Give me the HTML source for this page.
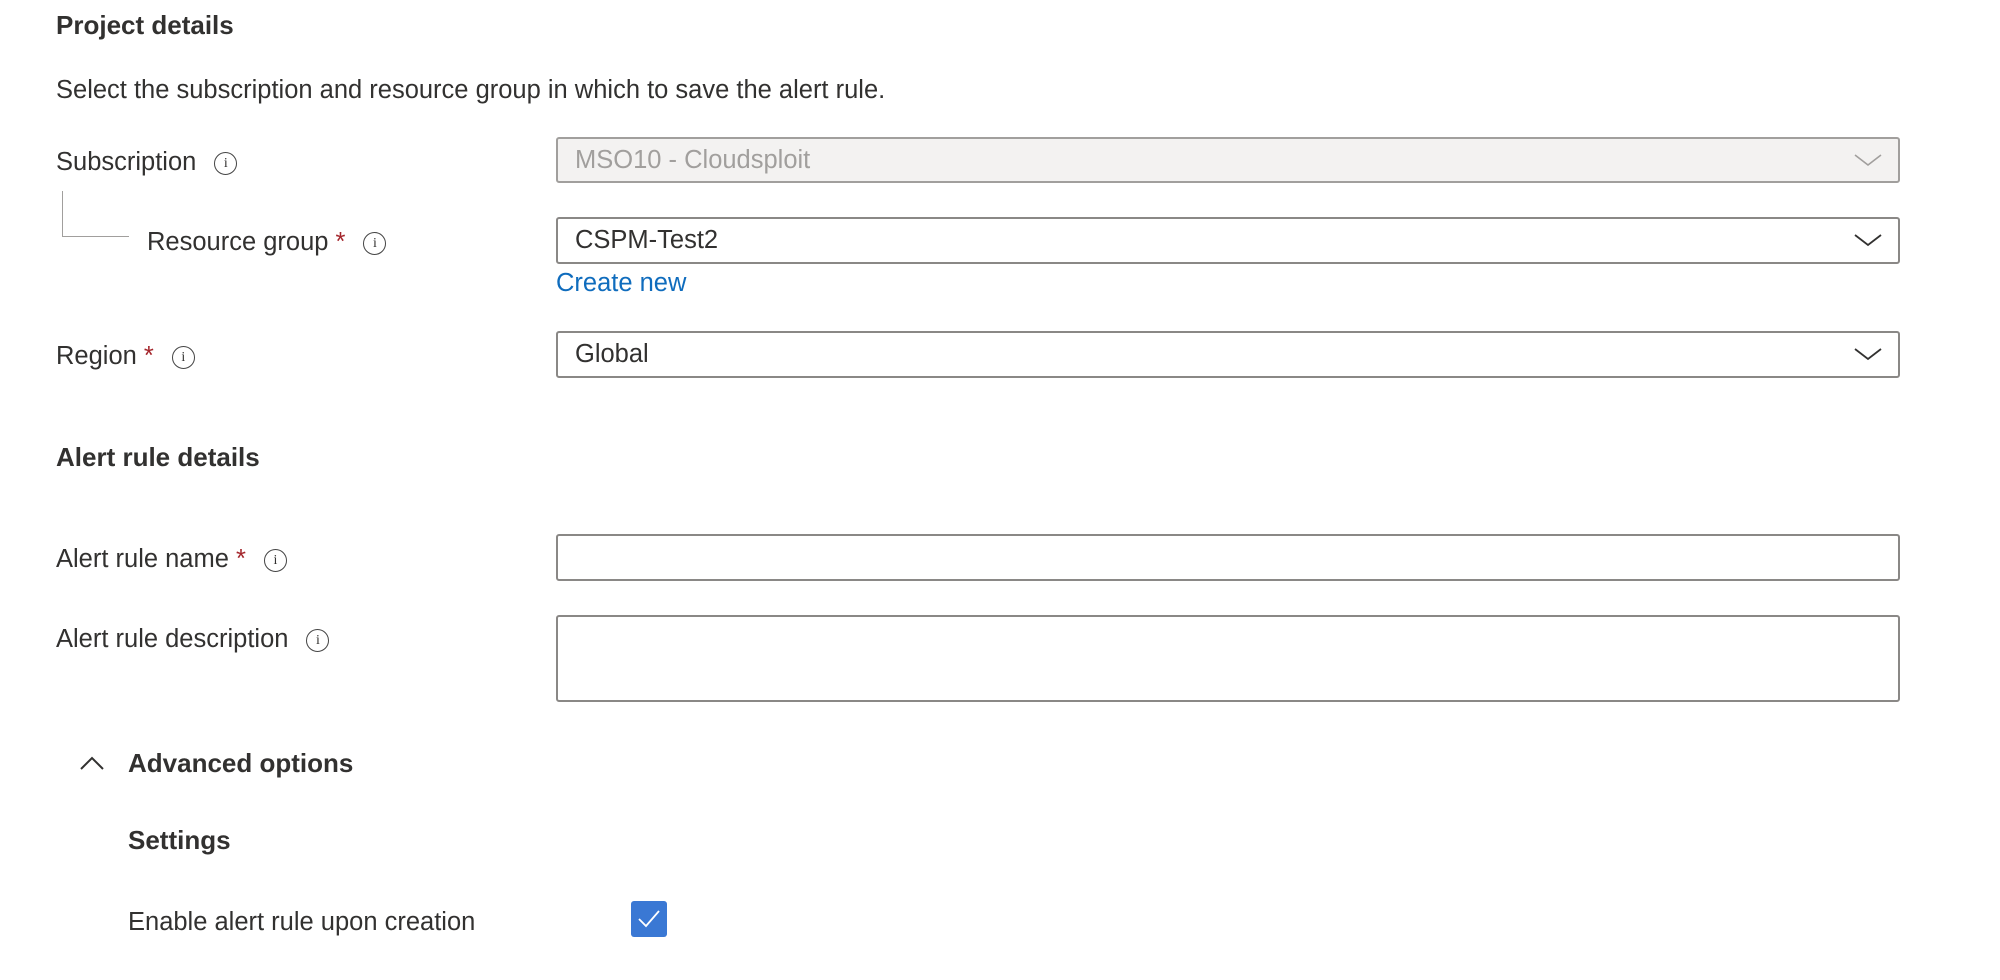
<!DOCTYPE html>
<html><head><meta charset="utf-8"><style>
body{margin:0;width:2000px;height:980px;background:#fff;font-family:"Liberation Sans",sans-serif;color:#323130;position:relative;overflow:hidden}
.a{position:absolute;white-space:nowrap}
h{position:absolute;font-weight:bold;font-size:26px;color:#323130;white-space:nowrap}
.l{position:absolute;font-size:25.5px;line-height:30px;white-space:nowrap}
.st{color:#a4262c}
.i{display:inline-block;width:21px;height:21px;border:1.5px solid #444;border-radius:50%;font-size:14px;line-height:21px;text-align:center;vertical-align:3px;margin-left:18px;box-sizing:content-box;font-family:"Liberation Serif",serif}
.box{position:absolute;left:556px;width:1344px;border:2px solid #8a8886;border-radius:3px;box-sizing:border-box;font-size:25.5px;line-height:42px;padding-left:17px}
.chev{position:absolute;right:16px;top:14px}
</style></head><body>
<h style="left:56px;top:10px">Project details</h>
<div class="l" style="left:56px;top:75px">Select the subscription and resource group in which to save the alert rule.</div>
<div class="l" style="left:56px;top:147px">Subscription<span class="i">i</span></div>
<div class="box" style="top:137px;height:46px;background:#f3f2f1;border-color:#a19f9d;color:#a19f9d">MSO10 - Cloudsploit<svg class="chev" width="28" height="14"><path d="M1 2L14 12L27 2" stroke="#a19f9d" stroke-width="1.6" fill="none"/></svg></div>
<div class="a" style="left:62px;top:191px;width:66px;height:45px;border-left:1.5px solid #a19f9d;border-bottom:1.5px solid #a19f9d"></div>
<div class="l" style="left:147px;top:227px">Resource group <span class="st">*</span><span class="i">i</span></div>
<div class="box" style="top:217px;height:47px">CSPM-Test2<svg class="chev" width="28" height="14"><path d="M1 2L14 12L27 2" stroke="#323130" stroke-width="1.8" fill="none"/></svg></div>
<div class="l" style="left:556px;top:268px;color:#0f6cbd">Create new</div>
<div class="l" style="left:56px;top:341px">Region <span class="st">*</span><span class="i">i</span></div>
<div class="box" style="top:331px;height:47px">Global<svg class="chev" width="28" height="14"><path d="M1 2L14 12L27 2" stroke="#323130" stroke-width="1.8" fill="none"/></svg></div>
<h style="left:56px;top:442px">Alert rule details</h>
<div class="l" style="left:56px;top:544px">Alert rule name <span class="st">*</span><span class="i">i</span></div>
<div class="box" style="top:534px;height:47px"></div>
<div class="l" style="left:56px;top:624px">Alert rule description<span class="i">i</span></div>
<div class="box" style="top:615px;height:87px"></div>
<svg class="a" style="left:79px;top:755px" width="26" height="16"><path d="M2 14L13 3L24 14" stroke="#323130" stroke-width="2" fill="none"/></svg>
<h style="left:128px;top:748px">Advanced options</h>
<h style="left:128px;top:825px">Settings</h>
<div class="l" style="left:128px;top:907px">Enable alert rule upon creation</div>
<div class="a" style="left:631px;top:901px;width:36px;height:36px;background:#3a78d4;border-radius:3px"><svg width="36" height="36"><path d="M8 18L15 25L28 10" stroke="#fff" stroke-width="1.8" fill="none"/></svg></div>
</body></html>
